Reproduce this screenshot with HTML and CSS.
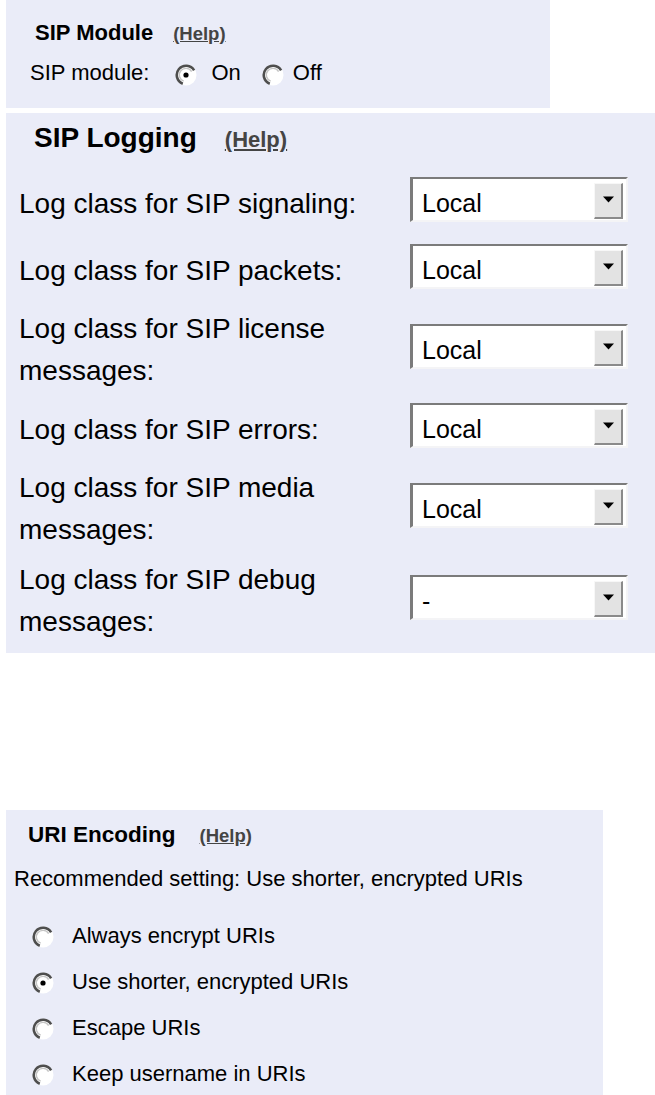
FILE: index.html
```html
<!DOCTYPE html>
<html lang="en">
<head>
<meta charset="utf-8">
<title>SIP settings</title>
<link rel="stylesheet" href="styles.css">
</head>
<body>
<div class="page">
  <section class="panel panel-module">
    <div class="title-row">
      <span class="title">SIP Module</span><a class="help">(Help)</a>
    </div>
    <div class="radio-line">
      <span class="rl-label">SIP module:</span>
      <svg class="radio r-on" width="22" height="22" viewBox="0 0 22 22"><circle cx="11" cy="11" r="10.5" fill="#fff"/><path d="M19.1 6.3 A9.3 9.3 0 1 0 7.8 19.7" fill="none" stroke="#4e4e4e" stroke-width="2.6"/><path d="M16.6 7.6 A6.6 6.6 0 1 0 8.7 17.2" fill="none" stroke="#c4c4c4" stroke-width="1.4"/><circle cx="11" cy="11" r="2.6" fill="#000"/></svg>
      <span>On</span>
      <svg class="radio r-off" width="22" height="22" viewBox="0 0 22 22"><circle cx="11" cy="11" r="10.5" fill="#fff"/><path d="M19.1 6.3 A9.3 9.3 0 1 0 7.8 19.7" fill="none" stroke="#4e4e4e" stroke-width="2.6"/><path d="M16.6 7.6 A6.6 6.6 0 1 0 8.7 17.2" fill="none" stroke="#c4c4c4" stroke-width="1.4"/></svg>
      <span>Off</span>
    </div>
  </section>

  <section class="panel panel-logging">
    <div class="title-row big">
      <span class="title">SIP Logging</span><a class="help">(Help)</a>
    </div>
    <div class="form-grid">
      <div class="label">Log class for SIP signaling:</div>
      <div class="select"><span class="sel-text">Local</span><span class="sel-btn"><svg width="11" height="7" viewBox="0 0 11 7"><polygon points="0,0.5 11,0.5 5.5,6.5" fill="#000"/></svg></span></div>

      <div class="label">Log class for SIP packets:</div>
      <div class="select"><span class="sel-text">Local</span><span class="sel-btn"><svg width="11" height="7" viewBox="0 0 11 7"><polygon points="0,0.5 11,0.5 5.5,6.5" fill="#000"/></svg></span></div>

      <div class="label">Log class for SIP license messages:</div>
      <div class="select"><span class="sel-text">Local</span><span class="sel-btn"><svg width="11" height="7" viewBox="0 0 11 7"><polygon points="0,0.5 11,0.5 5.5,6.5" fill="#000"/></svg></span></div>

      <div class="label">Log class for SIP errors:</div>
      <div class="select"><span class="sel-text">Local</span><span class="sel-btn"><svg width="11" height="7" viewBox="0 0 11 7"><polygon points="0,0.5 11,0.5 5.5,6.5" fill="#000"/></svg></span></div>

      <div class="label">Log class for SIP media messages:</div>
      <div class="select"><span class="sel-text">Local</span><span class="sel-btn"><svg width="11" height="7" viewBox="0 0 11 7"><polygon points="0,0.5 11,0.5 5.5,6.5" fill="#000"/></svg></span></div>

      <div class="label">Log class for SIP debug messages:</div>
      <div class="select"><span class="sel-text">-</span><span class="sel-btn"><svg width="11" height="7" viewBox="0 0 11 7"><polygon points="0,0.5 11,0.5 5.5,6.5" fill="#000"/></svg></span></div>
    </div>
  </section>

  <section class="panel panel-uri">
    <div class="title-row">
      <span class="title">URI Encoding</span><a class="help">(Help)</a>
    </div>
    <div class="desc">Recommended setting: Use shorter, encrypted URIs</div>
    <div class="radio-list">
      <div class="opt"><svg class="radio" width="22" height="22" viewBox="0 0 22 22"><circle cx="11" cy="11" r="10.5" fill="#fff"/><path d="M19.1 6.3 A9.3 9.3 0 1 0 7.8 19.7" fill="none" stroke="#4e4e4e" stroke-width="2.6"/><path d="M16.6 7.6 A6.6 6.6 0 1 0 8.7 17.2" fill="none" stroke="#c4c4c4" stroke-width="1.4"/></svg><span>Always encrypt URIs</span></div>
      <div class="opt"><svg class="radio" width="22" height="22" viewBox="0 0 22 22"><circle cx="11" cy="11" r="10.5" fill="#fff"/><path d="M19.1 6.3 A9.3 9.3 0 1 0 7.8 19.7" fill="none" stroke="#4e4e4e" stroke-width="2.6"/><path d="M16.6 7.6 A6.6 6.6 0 1 0 8.7 17.2" fill="none" stroke="#c4c4c4" stroke-width="1.4"/><circle cx="11" cy="11" r="2.6" fill="#000"/></svg><span>Use shorter, encrypted URIs</span></div>
      <div class="opt"><svg class="radio" width="22" height="22" viewBox="0 0 22 22"><circle cx="11" cy="11" r="10.5" fill="#fff"/><path d="M19.1 6.3 A9.3 9.3 0 1 0 7.8 19.7" fill="none" stroke="#4e4e4e" stroke-width="2.6"/><path d="M16.6 7.6 A6.6 6.6 0 1 0 8.7 17.2" fill="none" stroke="#c4c4c4" stroke-width="1.4"/></svg><span>Escape URIs</span></div>
      <div class="opt"><svg class="radio" width="22" height="22" viewBox="0 0 22 22"><circle cx="11" cy="11" r="10.5" fill="#fff"/><path d="M19.1 6.3 A9.3 9.3 0 1 0 7.8 19.7" fill="none" stroke="#4e4e4e" stroke-width="2.6"/><path d="M16.6 7.6 A6.6 6.6 0 1 0 8.7 17.2" fill="none" stroke="#c4c4c4" stroke-width="1.4"/></svg><span>Keep username in URIs</span></div>
    </div>
  </section>
</div>
</body>
</html>
```

FILE: styles.css
```css
html, body {
  margin: 0;
  padding: 0;
  overflow: hidden;
  background: #ffffff;
}

body {
  font-family: "Liberation Sans", Arial, sans-serif;
  color: #000;
}

.page {
  padding-left: 6px;
}

.panel {
  background: #eaecf8;
  box-sizing: border-box;
}

/* ---------- titles ---------- */
.title-row {
  display: flex;
  align-items: baseline;
}

.title {
  font-weight: bold;
  font-size: 22px;
  line-height: 26px;
}

.help {
  font-size: 18.5px;
  font-weight: bold;
  color: #444444;
  text-decoration: underline;
  cursor: pointer;
}

/* ---------- SIP Module ---------- */
.panel-module {
  width: 544px;
  height: 108px;
  padding: 20px 0 0 24px;
}

.panel-module .title {
  margin-left: 5px;
}

.panel-module .help {
  margin-left: 20px;
}

.radio-line {
  display: flex;
  align-items: center;
  font-size: 22px;
  line-height: 26px;
  margin-top: 14px;
}

.radio {
  flex: none;
  display: block;
  margin-top: 3px;
}

.r-on {
  margin-left: 26px;
  margin-right: 14px;
}

.r-off {
  margin-left: 21px;
  margin-right: 9px;
}

/* ---------- SIP Logging ---------- */
.panel-logging {
  margin-top: 5px;
  padding: 8px 0 10px 13px;
}

.title-row.big .title {
  font-size: 28px;
  line-height: 34px;
  margin-left: 15px;
}

.title-row.big .help {
  font-size: 22px;
  margin-left: 28px;
}

.title-row.big {
  margin-bottom: 11px;
}

.form-grid {
  display: grid;
  grid-template-columns: 391px 218px;
  align-items: center;
}

.label {
  font-size: 28px;
  line-height: 42px;
  padding: 8px 0 0;
}

.select {
  height: 45px;
  box-sizing: border-box;
  margin: 11px 0;
  background: #ffffff;
  border-top: 2px solid #7b7b7b;
  border-left: 3px solid #7b7b7b;
  border-right: 2px solid #f4f4f6;
  border-bottom: 2px solid #f4f4f6;
  display: flex;
  align-items: center;
  justify-content: space-between;
  padding: 0 3px 0 9px;
}

.sel-text {
  font-size: 25px;
  line-height: 30px;
  padding-top: 7px;
}

.sel-btn {
  width: 29px;
  height: 36px;
  box-sizing: border-box;
  margin-top: 3px;
  background: #e3e3e3;
  border-top: 1px solid #f7f7f7;
  border-left: 1px solid #f7f7f7;
  border-right: 2px solid #8a8a8a;
  border-bottom: 2px solid #8a8a8a;
  display: flex;
  align-items: center;
  justify-content: center;
}

.sel-btn svg {
  display: block;
  margin-top: -2px;
}

/* ---------- URI Encoding ---------- */
.panel-uri {
  width: 597px;
  height: 285px;
  margin-top: 157px;
  padding: 12px 0 0 8px;
}

.panel-uri .title {
  margin-left: 14px;
  font-size: 22.5px;
}

.panel-uri .help {
  margin-left: 24px;
}

.desc {
  font-size: 22px;
  line-height: 26px;
  margin-top: 18px;
}

.radio-list {
  margin-top: 21px;
  padding-left: 18px;
}

.opt {
  height: 46px;
  display: flex;
  align-items: center;
  font-size: 22px;
  line-height: 26px;
}

.opt .radio {
  margin-top: 1px;
  margin-right: 18px;
}
```
